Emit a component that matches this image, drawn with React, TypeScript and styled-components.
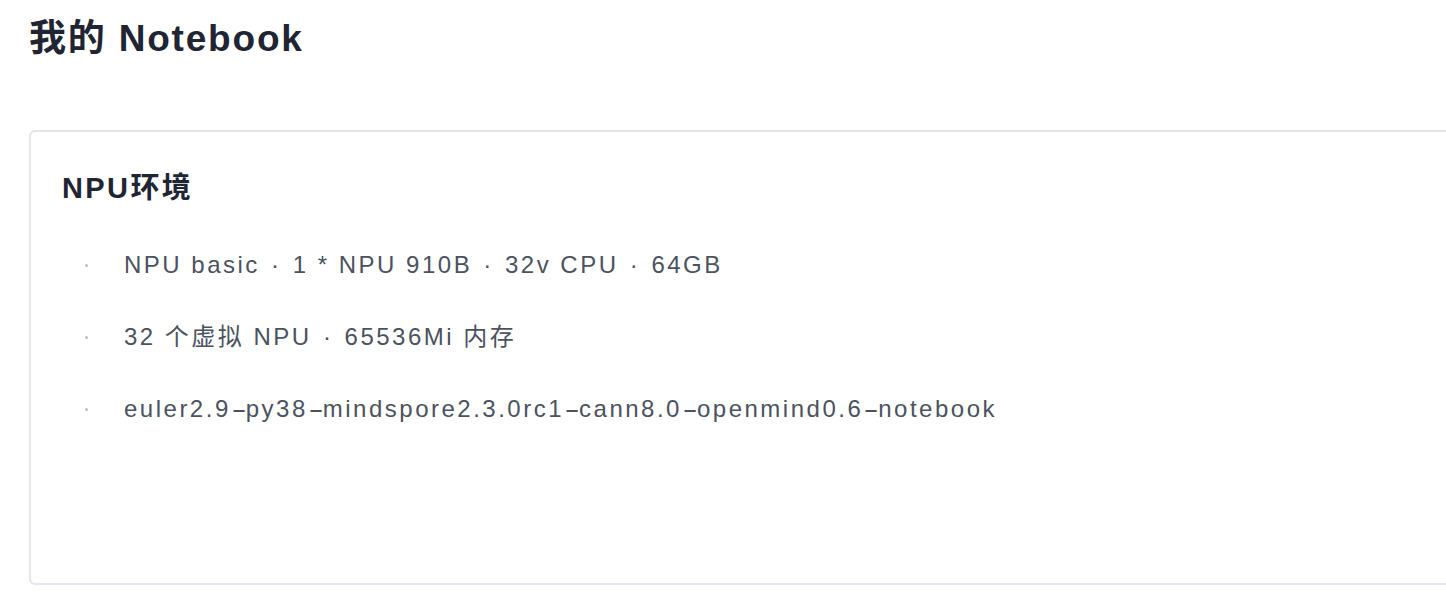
import React from 'react';
import styled, {createGlobalStyle} from 'styled-components';

const GlobalStyle = createGlobalStyle`
  html, body {
    margin: 0;
    padding: 0;
    background: #ffffff;
    overflow: hidden;
  }
  body {
    font-family: "Liberation Sans", "Noto Sans CJK SC", sans-serif;
    -webkit-font-smoothing: antialiased;
  }
`;

const Page = styled.main`
  padding: 14px 0 0 29px;
  width: 1500px;
`;

const Title = styled.h1`
  margin: 0;
  font-size: 37px;
  line-height: 50px;
  font-weight: 700;
  color: #1f2533;
  letter-spacing: 1.8px;
`;

const Card = styled.section`
  margin-top: 66px;
  box-sizing: border-box;
  width: 1440px;
  height: 455px;
  border: 2px solid #e5e4ef;
  border-radius: 6px;
  padding: 36px 0 0 31px;
`;

const CardTitle = styled.h2`
  margin: 0;
  font-size: 29px;
  line-height: 40px;
  font-weight: 700;
  color: #1f2533;
  letter-spacing: 2.4px;
`;

const Specs = styled.ul`
  list-style: none;
  margin: 39px 0 0;
  padding: 0;
  display: grid;
  row-gap: 36px;
`;

const Spec = styled.li`
  position: relative;
  padding-left: 62px;
  font-size: 24px;
  line-height: 36px;
  color: #4b5260;
  letter-spacing: 2.5px;

  &::before {
    content: '';
    position: absolute;
    left: 23px;
    top: 17px;
    width: 3px;
    height: 3px;
    border-radius: 50%;
    background: #b9bdc6;
  }
`;

const Dot = styled.span`
  margin: 0 2px;
`;

/* the reference font draws a long hyphen */
const Dash = styled.span`
  display: inline-block;
  margin: 0 3px 0 4px;
  letter-spacing: 0;
  transform: scaleX(1.9);
`;

const specs: string[][] = [
  ['NPU basic', '1 * NPU 910B', '32v CPU', '64GB'],
  ['32 个虚拟 NPU', '65536Mi 内存'],
  ['euler2.9-py38-mindspore2.3.0rc1-cann8.0-openmind0.6-notebook'],
];

function withDashes(text: string) {
  return text.split('-').map((chunk, i) => (
    <React.Fragment key={i}>
      {i > 0 && <Dash>-</Dash>}
      {chunk}
    </React.Fragment>
  ));
}

export default function App() {
  return (
    <>
      <GlobalStyle />
      <Page>
        <Title>我的 Notebook</Title>
        <Card>
          <CardTitle>NPU环境</CardTitle>
          <Specs>
            {specs.map((parts) => (
              <Spec key={parts.join()}>
                {parts.map((p, i) => (
                  <React.Fragment key={p}>
                    {i > 0 && (
                      <>
                        {' '}
                        <Dot>·</Dot>{' '}
                      </>
                    )}
                    {withDashes(p)}
                  </React.Fragment>
                ))}
              </Spec>
            ))}
          </Specs>
        </Card>
      </Page>
    </>
  );
}
